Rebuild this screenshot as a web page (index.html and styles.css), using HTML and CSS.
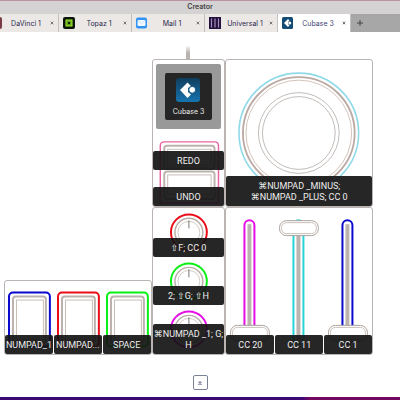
FILE: index.html
```
<!DOCTYPE html>
<html lang="en">
<head>
<meta charset="utf-8">
<meta name="viewport" content="width=device-width, initial-scale=1">
<title>Creator</title>
<link rel="stylesheet" href="styles.css">
</head>
<body>
<header class="titlebar"><h1>Creator</h1></header>
<nav class="tabs" aria-label="Layouts">
  <div class="tab">
    <svg viewBox="0 0 12 12"><rect width="12" height="12" rx="2" fill="#7a3c44"/></svg>
    <button class="tab-name" type="button">DaVinci 1</button>
    <button class="close" type="button" aria-label="Close DaVinci 1"><svg viewBox="0 0 4 4"><path d="M.7.7 3.3 3.3M3.3.7.7 3.3"/></svg></button>
  </div>
  <div class="tab">
    <svg viewBox="0 0 12 12"><rect width="12" height="12" rx="2" fill="#0b1408"/><rect x="3" y="3" width="6" height="6" fill="#5ea21b" stroke="#a6f02c"/><rect x="5" y="5" width="2" height="2" fill="#102008"/></svg>
    <button class="tab-name" type="button">Topaz 1</button>
    <button class="close" type="button" aria-label="Close Topaz 1"><svg viewBox="0 0 4 4"><path d="M.7.7 3.3 3.3M3.3.7.7 3.3"/></svg></button>
  </div>
  <div class="tab">
    <svg viewBox="0 0 12 12"><rect y=".5" width="11" height="11" rx="2" fill="#2f94f2"/><rect x="1.500" y="3" width="8" height="6" rx="1" fill="#f2f8ff"/><path d="M2 3.800 5.500 6.400 9 3.800" fill="none" stroke="#b5d5f5" stroke-width=".6"/></svg>
    <button class="tab-name" type="button">Mail 1</button>
    <button class="close" type="button" aria-label="Close Mail 1"><svg viewBox="0 0 4 4"><path d="M.7.7 3.3 3.3M3.3.7.7 3.3"/></svg></button>
  </div>
  <div class="tab">
    <svg viewBox="0 0 12 12"><rect width="12" height="12" fill="#23103f"/><path d="M2.500 1.500v9M6 1.500v9M9.500 1.500v9" stroke="#a58cb8" stroke-width="1.200"/></svg>
    <button class="tab-name" type="button">Universal 1</button>
    <button class="close" type="button" aria-label="Close Universal 1"><svg viewBox="0 0 4 4"><path d="M.7.7 3.3 3.3M3.3.7.7 3.3"/></svg></button>
  </div>
  <div class="tab active">
    <svg viewBox="0 0 24 24"><rect width="22" height="24" rx="3" fill="#124b73"/><path d="M4 12 12 4l3 3-3 3v4l3 3-3 3z" fill="#fff"/><circle cx="15.500" cy="12" r="3" fill="#fff"/></svg>
    <button class="tab-name" type="button">Cubase 3</button>
    <button class="close" type="button" aria-label="Close Cubase 3"><svg viewBox="0 0 4 4"><path d="M.7.7 3.3 3.3M3.3.7.7 3.3"/></svg></button>
  </div>
  <button class="add" type="button" aria-label="Add tab"><svg viewBox="0 0 8 8"><path d="M4 1v6M1 4h6"/></svg></button>
</nav>

<main class="canvas">
  <div class="device">
    <section class="module screen-module">
      <svg class="cable" viewBox="0 0 4 14"><defs><linearGradient id="fade" x2="0" y2="1"><stop stop-color="#b8b5b1" stop-opacity=".1"/><stop offset=".5" stop-color="#b8b5b1"/></linearGradient></defs><rect width="4" height="14" fill="url(#fade)"/></svg>
      <div class="screen">
        <div class="app">
          <svg viewBox="0 0 24 24"><defs><linearGradient id="sea" x2="0" y2="1"><stop stop-color="#103d5e"/><stop offset="1" stop-color="#1674ae"/></linearGradient></defs><rect width="24" height="24" rx="3" fill="url(#sea)"/><path d="M4 12 11.500 4.500l3.500 3.500-3 2v4l3 2.500-3.500 3.500z" fill="#fff"/><circle cx="16.200" cy="11.800" r="3.400" fill="#fff" stroke="#125886"/></svg>
          <span>Cubase 3</span>
        </div>
      </div>
      <div class="pair">
        <svg class="art" viewBox="0 0 72 74" fill="none"><path d="M7 71V13q0-4 4-4h51q4 0 4 4v58z" stroke="#e865a2" stroke-width="1.500"/><g stroke="#bcb3ad" stroke-width="2"><rect x="11" y="13" width="51" height="23" rx="3"/><rect x="11" y="39" width="51" height="28" rx="3"/></g><g stroke="#c9bdb6"><rect x="14.500" y="16.500" width="44" height="16"/><rect x="14.500" y="42.500" width="44" height="20"/></g></svg>
        <button class="cell" type="button"><span class="label">REDO</span></button>
        <button class="cell" type="button"><span class="label">UNDO</span></button>
      </div>
    </section>

    <section class="module dial-module">
      <button class="cell" type="button">
        <svg class="art" viewBox="0 0 146 146" fill="none"><circle cx="73" cy="73" r="60" stroke="#90d9e9" stroke-width="1.600"/><circle cx="73" cy="73" r="56" stroke="#bba9a4" stroke-width="1.800"/><circle cx="73" cy="73" r="53" stroke="#d5c3b8"/><g stroke="#c1bcb9"><circle cx="73" cy="73" r="40.500"/><circle cx="73" cy="73" r="36.500"/></g></svg>
        <span class="label">⌘NUMPAD _MINUS;<br>⌘NUMPAD _PLUS; CC 0</span>
      </button>
    </section>

    <section class="module keys-module">
      <button class="cell blue" type="button"><svg class="art" viewBox="0 0 48 72" fill="none"><rect class="ring" x="4" y="11" width="41" height="54" rx="4"/><rect x="8" y="15" width="33" height="46" rx="3" stroke="#bbb2ad" stroke-width="2"/><rect x="11.500" y="18.500" width="27" height="40" stroke="#c9bdb6"/></svg><span class="label clip">NUMPAD_1</span></button>
      <button class="cell red" type="button"><svg class="art" viewBox="0 0 48 72" fill="none"><rect class="ring" x="4" y="11" width="41" height="54" rx="4"/><rect x="8" y="15" width="33" height="46" rx="3" stroke="#bbb2ad" stroke-width="2"/><rect x="11.500" y="18.500" width="27" height="40" stroke="#c9bdb6"/></svg><span class="label clip">NUMPAD...</span></button>
      <button class="cell green" type="button"><svg class="art" viewBox="0 0 48 72" fill="none"><rect class="ring" x="4" y="11" width="41" height="54" rx="4"/><rect x="8" y="15" width="33" height="46" rx="3" stroke="#bbb2ad" stroke-width="2"/><rect x="11.500" y="18.500" width="27" height="40" stroke="#c9bdb6"/></svg><span class="label clip">SPACE</span></button>
    </section>

    <section class="module knobs-module">
      <button class="cell red" type="button"><svg class="art" viewBox="0 0 72 48" fill="none"><circle class="ring" cx="36" cy="24" r="18"/><circle cx="36" cy="24" r="14" stroke="#b8aea8" stroke-width="1.500"/><circle cx="36" cy="24" r="11" stroke="#d2cbc6"/><path d="M36 12v8" stroke="#777"/></svg><span class="label">⇧F; CC 0</span></button>
      <button class="cell green" type="button"><svg class="art" viewBox="0 0 72 48" fill="none"><circle class="ring" cx="36" cy="24" r="18"/><circle cx="36" cy="24" r="14" stroke="#b8aea8" stroke-width="1.500"/><circle cx="36" cy="24" r="11" stroke="#d2cbc6"/><path d="M36 12v8" stroke="#777"/></svg><span class="label">2; ⇧G; ⇧H</span></button>
      <button class="cell magenta" type="button"><svg class="art" viewBox="0 0 72 48" fill="none"><circle class="ring" cx="36" cy="24" r="18"/><circle cx="36" cy="24" r="14" stroke="#b8aea8" stroke-width="1.500"/><circle cx="36" cy="24" r="11" stroke="#d2cbc6"/><path d="M36 12v8" stroke="#777"/></svg><span class="label">⌘NUMPAD _1; G;<br>H</span></button>
    </section>

    <section class="module sliders-module">
      <button class="cell magenta" type="button"><svg class="art" viewBox="0 0 48 146" fill="none"><rect class="ring" x="18.500" y="12" width="10" height="124" rx="5"/><path d="M23.500 16v116" stroke="#bcb3ae" stroke-width="4"/><rect x="4.500" y="117.500" width="39" height="16" rx="7" fill="#fff" stroke="#aaa29d"/><rect x="6.500" y="119.500" width="35" height="12" rx="5" stroke="#c9c0ba"/></svg><span class="label">CC 20</span></button>
      <button class="cell cyan" type="button"><svg class="art" viewBox="0 0 48 146" fill="none"><rect class="ring" x="18.500" y="12" width="10" height="124" rx="5"/><path d="M23.500 16v116" stroke="#bcb3ae" stroke-width="4"/><rect x="4.500" y="12.500" width="39" height="15" rx="7" fill="#fff" stroke="#aaa29d"/><rect x="6.500" y="14.500" width="35" height="11" rx="5" stroke="#c9c0ba"/></svg><span class="label">CC 11</span></button>
      <button class="cell blue" type="button"><svg class="art" viewBox="0 0 48 146" fill="none"><rect class="ring" x="18.500" y="12" width="10" height="124" rx="5"/><path d="M23.500 16v116" stroke="#bcb3ae" stroke-width="4"/><rect x="4.500" y="117.500" width="39" height="16" rx="7" fill="#fff" stroke="#aaa29d"/><rect x="6.500" y="119.500" width="35" height="12" rx="5" stroke="#c9c0ba"/></svg><span class="label">CC 1</span></button>
    </section>
  </div>
  <button class="expand" type="button" aria-label="Expand"><svg viewBox="0 0 6 6"><path d="M1.500 3 3 1.500 4.500 3M1.500 5l1.500-1.500L4.500 5"/></svg></button>
</main>
</body>
</html>
```
FILE: styles.css
```
* { box-sizing: border-box; }

body {
  margin: 0;
  min-height: 100vh;
  display: flex;
  flex-direction: column;
  overflow-x: hidden;
  background: #fff;
  font-family: Inter, "DejaVu Sans", sans-serif;
  font-size: 8px;
  line-height: 11px;
  color: #29294d;
}

button {
  margin: 0;
  padding: 0;
  border: 0;
  background: none;
  font: inherit;
  color: inherit;
}

svg { display: block; }

.titlebar {
  height: 14px;
  border-top: 1px solid #bd92a5;
  background: #d4d2d3;
}

.titlebar h1 {
  margin: 0;
  font-size: 7px;
  line-height: 12px;
  font-weight: 600;
  text-align: center;
  color: #444;
}

.tabs {
  display: flex;
  height: 18px;
  overflow: hidden;
  background: #a8a7a7;
}

.tab {
  flex: 0 0 73px;
  display: flex;
  align-items: center;
  padding: 0 4px;
  border-right: 1px solid #c5c0be;
  background: #ece8e6;
}

.tab:first-child { margin-left: -14px; }
.tab.active { background: #fff; }
.tab > svg { width: 12px; height: 12px; }

.tab-name {
  flex: 1;
  font-size: 7px;
  white-space: nowrap;
}

.active .tab-name { color: #3c4272; }

.close svg { width: 4px; height: 4px; }

.close path, .add path, .expand path {
  fill: none;
  stroke: #777;
}

.add { width: 17px; }
.add svg { width: 8px; height: 8px; margin: auto; }
.add path { stroke: #444; }

.canvas {
  flex: 1;
  display: flex;
  flex-direction: column;
  justify-content: space-between;
  padding: 27px 27px 7px 4px;
  border-bottom: 3px solid;
  border-image: linear-gradient(90deg, #3b0874 75%, #72085f 77%) 3;
}

.device {
  display: grid;
  grid-template-columns: 2fr 1fr 2fr;
  grid-template-rows: 148px 148px;
}

.module {
  display: grid;
  position: relative;
  border: 1px solid #bab5b2;
  border-radius: 3px;
}

.screen-module { grid-column: 2; grid-template-rows: 1fr 1fr; }
.dial-module { grid-column: 3; }

.keys-module {
  grid-column: 1;
  align-self: end;
  height: 75px;
}

.keys-module, .sliders-module {
  grid-template-columns: repeat(3, minmax(0, 1fr));
  column-gap: 1px;
}

.knobs-module { grid-template-rows: repeat(3, 1fr); }

.cable {
  position: absolute;
  bottom: 100%;
  left: 50%;
  width: 4px;
  height: 14px;
  transform: translateX(-50%);
}

.screen {
  display: grid;
  place-items: center;
  margin: 4px 3px;
  background: #999;
  border-radius: 2px;
}

.app {
  display: flex;
  flex-direction: column;
  align-items: center;
  gap: 4px;
  width: 72%;
  padding: 5px 0 3px;
  border-radius: 2px;
  background: #252525;
  color: #eee;
}

.app svg { width: 24px; height: 24px; }
.app span { font-size: 7px; white-space: nowrap; }

.pair {
  position: relative;
  display: grid;
  grid-template-rows: 1fr 1fr;
}

.cell {
  position: relative;
  display: flex;
  align-items: flex-end;
}

.art {
  position: absolute;
  inset: 0;
  width: 100%;
  height: 100%;
}

.label {
  position: relative;
  flex: 1;
  min-width: 0;
  padding: 5px 0 3px;
  border-radius: 2px;
  background: rgba(20, 20, 20, 0.92);
  color: #eee;
  font-family: Roboto, "DejaVu Sans", sans-serif;
  font-size: 9px;
  text-align: center;
  white-space: nowrap;
}

.label.clip { overflow: hidden; }

.ring { stroke: currentColor; stroke-width: 2; }
.blue { color: #0909ce; }
.red { color: #e80d18; }
.green { color: #08ef14; }
.magenta { color: #e60ce6; }
.cyan { color: #27d3d6; }

.expand {
  align-self: center;
  display: grid;
  place-items: center;
  width: 15px;
  height: 15px;
  margin-left: 23px;
  border: 1px solid #7b8298;
  border-radius: 2px;
}

.expand svg { width: 6px; height: 6px; }
.expand path { stroke: #414667; }
```
